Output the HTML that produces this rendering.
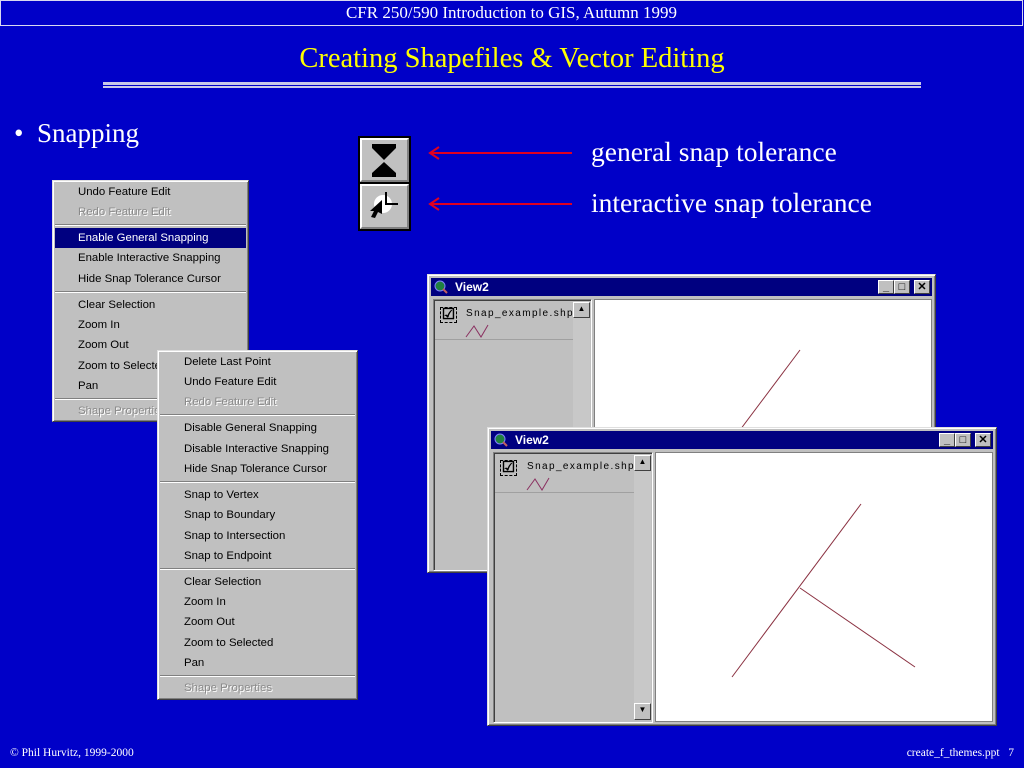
<!DOCTYPE html>
<html><head><meta charset="utf-8"><style>
*{margin:0;padding:0;box-sizing:border-box}
body{width:1024px;height:768px;background:#0000c8;position:relative;overflow:hidden;font-family:"Liberation Serif",serif;color:#fff}
.a{position:absolute}
.menu{position:absolute;background:#c0c0c0;border:1px solid;border-color:#dfdfdf #404040 #404040 #dfdfdf;box-shadow:inset 1px 1px #fff,inset -1px -1px #808080;font-family:"Liberation Sans",sans-serif;font-size:11.4px;color:#000}
.menu div{position:absolute;left:2px;right:2px;height:20px;line-height:20px;white-space:nowrap}
.menu .d{color:#8a8a8a;text-shadow:1px 1px #fff}
.menu .s{height:2px;border-top:1px solid #808080;border-bottom:1px solid #fff}
.menu .h{background:#000080;color:#fff}
.win{position:absolute;background:#c0c0c0;border:1px solid;border-color:#dfdfdf #404040 #404040 #dfdfdf;box-shadow:inset 1px 1px #fff,inset -1px -1px #808080}
.tb{position:absolute;left:3px;right:3px;top:3px;height:18px;background:#000080;color:#fff;font:bold 12px "Liberation Sans",sans-serif;line-height:18px}
.btn{position:absolute;top:2px;width:16px;height:14px;background:#c0c0c0;border:1px solid;border-color:#fff #404040 #404040 #fff;color:#000;font:bold 11px "Liberation Sans",sans-serif;line-height:12px;text-align:center}
.sunk{position:absolute;border:1px solid;border-color:#808080 #fff #fff #808080;box-shadow:inset 1px 1px #404040}
.ln{font:10px "Liberation Sans",sans-serif;letter-spacing:1.4px}
</style></head><body>
<div class="a" style="left:0;top:0;width:1023px;height:26px;border:1px solid #d8d8f0;text-align:center;font-size:17px;line-height:24px">CFR 250/590 Introduction to GIS, Autumn 1999</div>
<div class="a" style="left:0;top:41px;width:1024px;text-align:center;color:#ffff00;font-size:28.5px;line-height:36px">Creating Shapefiles &amp; Vector Editing</div>
<div class="a" style="left:103px;top:82px;width:818px;height:3px;background:#c8c8e8"></div>
<div class="a" style="left:103px;top:86px;width:818px;height:2px;background:#c8c8e8"></div>
<div class="a" style="left:14px;top:116px;font-size:27px;line-height:34px">•&nbsp;&nbsp;Snapping</div>

<!-- tool buttons -->
<div class="a" style="left:358px;top:136px;width:53px;height:95px;background:#000"></div>
<div class="a" style="left:360px;top:138px;width:49px;height:44px;background:#c0c0c0;border:2px solid;border-color:#fff #808080 #808080 #fff">
<svg width="45" height="40" style="position:absolute;left:0;top:0"><path d="M10 4H34V8L22 20L10 8Z" fill="#000"/><path d="M22 22L34 33V37H10V33Z" fill="#000"/></svg></div>
<div class="a" style="left:360px;top:184px;width:49px;height:45px;background:#c0c0c0;border:2px solid;border-color:#fff #808080 #808080 #fff">
<svg width="45" height="41" style="position:absolute;left:0;top:0"><circle cx="21" cy="18" r="9" fill="#fff"/><path d="M24 6V18H36" stroke="#000" stroke-width="2" fill="none"/><path d="M20 14L20 28L16 26L13 32L9 31L12 25L8 25Z" fill="#000"/></svg></div>

<!-- arrows -->
<svg class="a" style="left:425px;top:140px" width="150" height="75"><g stroke="#e00020" stroke-width="2" fill="none"><path d="M5 13H147"/><path d="M14 7L5 13L14 19"/><path d="M5 64H147"/><path d="M14 58L5 64L14 70"/></g></svg>
<div class="a" style="left:591px;top:134px;font-size:27.5px;line-height:36px">general snap tolerance</div>
<div class="a" style="left:591px;top:185px;font-size:27.5px;line-height:36px">interactive snap tolerance</div>

<!-- menu 1 -->
<div class="menu" style="left:52px;top:180px;width:197px;height:242px">
<div style="top:1px;padding-left:23px">Undo Feature Edit</div>
<div class="d" style="top:21px;padding-left:23px">Redo Feature Edit</div>
<div class="s" style="top:43px"></div>
<div class="h" style="top:47px;padding-left:23px">Enable General Snapping</div>
<div style="top:67px;padding-left:23px">Enable Interactive Snapping</div>
<div style="top:88px;padding-left:23px">Hide Snap Tolerance Cursor</div>
<div class="s" style="top:110px"></div>
<div style="top:114px;padding-left:23px">Clear Selection</div>
<div style="top:134px;padding-left:23px">Zoom In</div>
<div style="top:154px;padding-left:23px">Zoom Out</div>
<div style="top:175px;padding-left:23px">Zoom to Selected</div>
<div style="top:195px;padding-left:23px">Pan</div>
<div class="s" style="top:217px"></div>
<div class="d" style="top:220px;padding-left:23px">Shape Properties</div>
</div>

<!-- menu 2 -->
<div class="menu" style="left:157px;top:350px;width:201px;height:350px">
<div style="top:1px;padding-left:24px">Delete Last Point</div>
<div style="top:21px;padding-left:24px">Undo Feature Edit</div>
<div class="d" style="top:41px;padding-left:24px">Redo Feature Edit</div>
<div class="s" style="top:63px"></div>
<div style="top:67px;padding-left:24px">Disable General Snapping</div>
<div style="top:88px;padding-left:24px">Disable Interactive Snapping</div>
<div style="top:108px;padding-left:24px">Hide Snap Tolerance Cursor</div>
<div class="s" style="top:130px"></div>
<div style="top:134px;padding-left:24px">Snap to Vertex</div>
<div style="top:154px;padding-left:24px">Snap to Boundary</div>
<div style="top:175px;padding-left:24px">Snap to Intersection</div>
<div style="top:195px;padding-left:24px">Snap to Endpoint</div>
<div class="s" style="top:217px"></div>
<div style="top:221px;padding-left:24px">Clear Selection</div>
<div style="top:241px;padding-left:24px">Zoom In</div>
<div style="top:261px;padding-left:24px">Zoom Out</div>
<div style="top:282px;padding-left:24px">Zoom to Selected</div>
<div style="top:302px;padding-left:24px">Pan</div>
<div class="s" style="top:324px"></div>
<div class="d" style="top:327px;padding-left:24px">Shape Properties</div>
</div>

<!-- window 1 -->
<div class="win" style="left:427px;top:274px;width:509px;height:299px">
<div class="tb"><svg width="16" height="16" style="position:absolute;left:2px;top:1px"><circle cx="7" cy="7" r="5" fill="#208040"/><circle cx="7" cy="7" r="5" fill="none" stroke="#8080ff"/><path d="M10 10L14 14" stroke="#c06060" stroke-width="2"/></svg><span style="position:absolute;left:24px">View2</span>
<div class="btn" style="left:447px">_</div><div class="btn" style="left:463px">□</div><div class="btn" style="left:483px">✕</div></div>
<div class="sunk" style="left:5px;top:24px;width:159px;height:272px"></div>
<div class="a" style="left:7px;top:27px;width:138px;height:38px;border-bottom:1px solid #a0a0a0;color:#000;overflow:hidden"><div class="a" style="left:5px;top:5px;width:17px;height:16px;border:1px dashed #000;font:bold 15px sans-serif;line-height:14px;text-align:center">☑</div><span class="a ln" style="left:31px;top:6px">Snap_example.shp</span><svg class="a" style="left:30px;top:20px" width="34" height="18"><path d="M1 15L9 4L16 15L23 3" stroke="#8a3060" fill="none"/></svg></div>
<div class="a" style="left:145px;top:27px;width:17px;height:266px;background:#c8c8c8"><div class="btn" style="left:0;top:0;width:17px;height:16px;font-size:8px">▲</div></div>
<div class="a" style="left:166px;top:24px;width:338px;height:270px;background:#fff;border:1px solid #808080"><svg width="338" height="270"><path d="M205 50L130 150" stroke="#8a3040"/></svg></div>
</div>

<!-- window 2 -->
<div class="win" style="left:487px;top:427px;width:510px;height:299px">
<div class="tb"><svg width="16" height="16" style="position:absolute;left:2px;top:1px"><circle cx="7" cy="7" r="5" fill="#208040"/><circle cx="7" cy="7" r="5" fill="none" stroke="#8080ff"/><path d="M10 10L14 14" stroke="#c06060" stroke-width="2"/></svg><span style="position:absolute;left:24px">View2</span>
<div class="btn" style="left:448px">_</div><div class="btn" style="left:464px">□</div><div class="btn" style="left:484px">✕</div></div>
<div class="sunk" style="left:5px;top:24px;width:160px;height:271px"></div>
<div class="a" style="left:7px;top:27px;width:139px;height:38px;border-bottom:1px solid #a0a0a0;color:#000;overflow:hidden"><div class="a" style="left:5px;top:5px;width:17px;height:16px;border:1px dashed #000;font:bold 15px sans-serif;line-height:14px;text-align:center">☑</div><span class="a ln" style="left:32px;top:6px">Snap_example.shp</span><svg class="a" style="left:31px;top:20px" width="34" height="18"><path d="M1 15L9 4L16 15L23 3" stroke="#8a3060" fill="none"/></svg></div>
<div class="a" style="left:146px;top:27px;width:17px;height:265px;background:#c8c8c8"><div class="btn" style="left:0;top:0;width:17px;height:16px;font-size:8px">▲</div><div class="btn" style="left:0;top:248px;width:17px;height:17px;font-size:8px">▼</div></div>
<div class="a" style="left:167px;top:24px;width:338px;height:270px;background:#fff;border:1px solid #808080"><svg width="338" height="270"><g stroke="#8a3040" fill="none"><path d="M205 51L76 224"/><path d="M144 135L259 214"/></g></svg></div>
</div>

<div class="a" style="left:10px;top:747px;font-size:11.5px">© Phil Hurvitz, 1999-2000</div>
<div class="a" style="right:10px;top:747px;font-size:11.5px">create_f_themes.ppt&nbsp;&nbsp;&nbsp;7</div>
</body></html>
